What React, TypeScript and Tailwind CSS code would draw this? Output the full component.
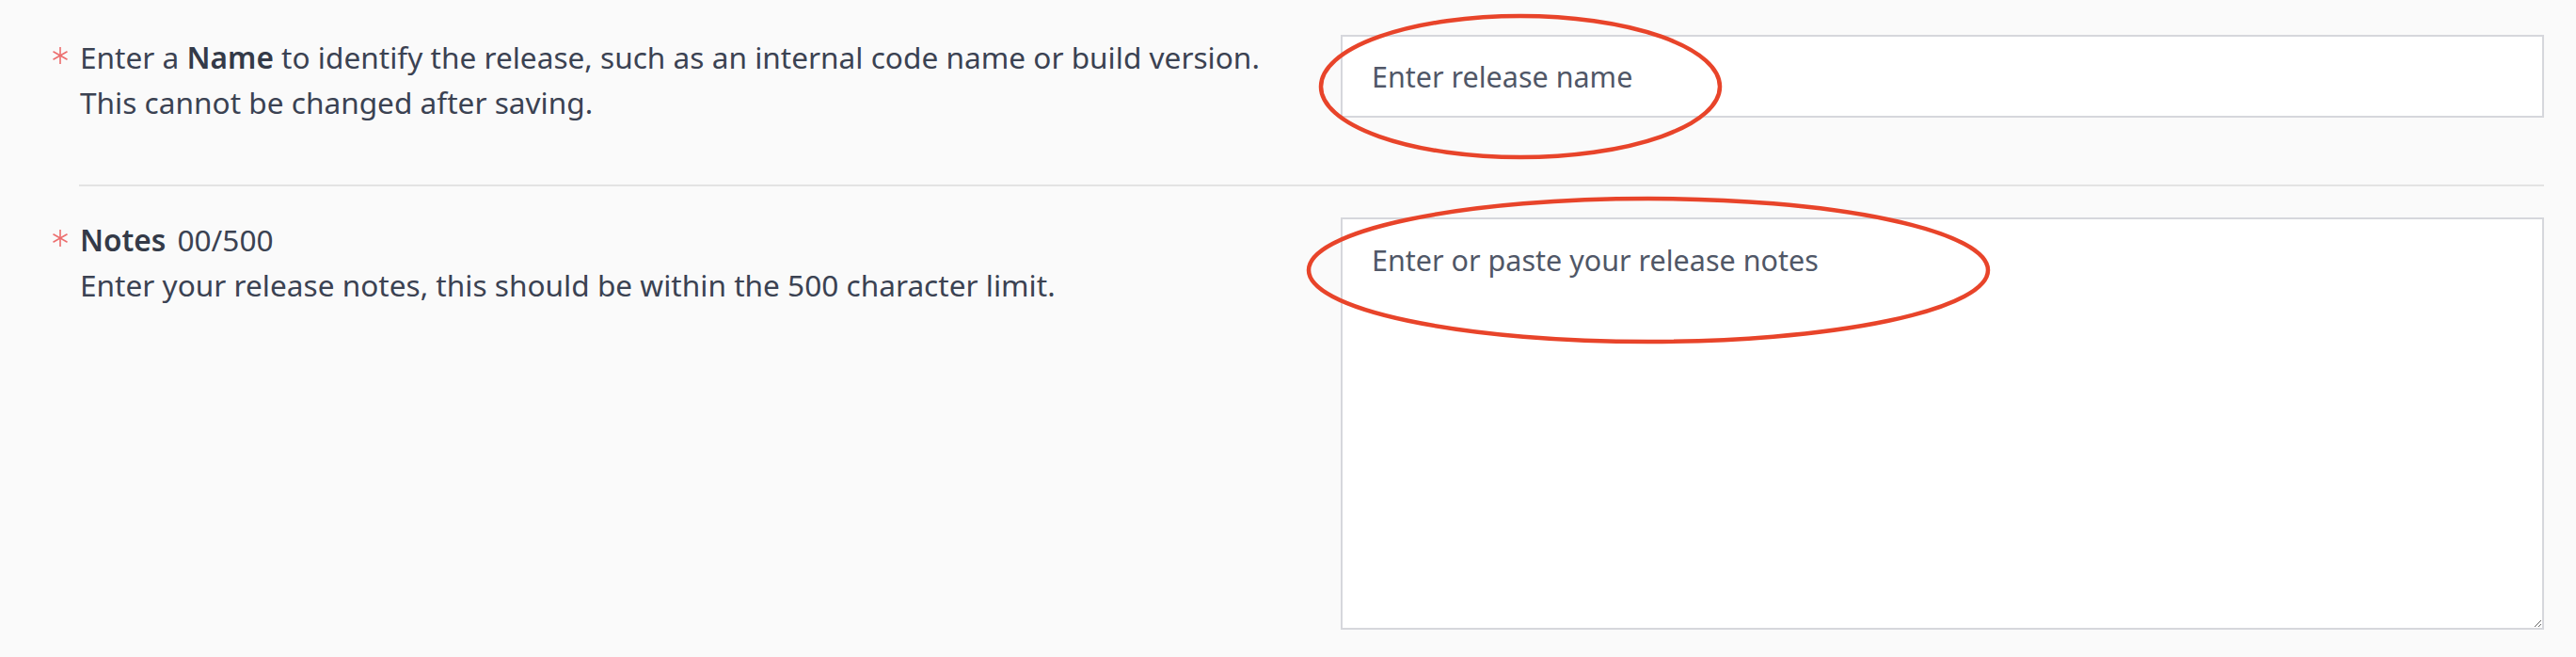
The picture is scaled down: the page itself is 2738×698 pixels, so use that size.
import React from 'react'

const Asterisk = () => (
    <svg width="18" height="18" viewBox="0 0 18 18" className="shrink-0 mt-[13px]" stroke="#ec6d6d" strokeWidth="1.6" fill="none">
        <line x1="9" y1="0" x2="9" y2="18" />
        <line x1="1.5" y1="4.8" x2="16.5" y2="13.2" />
        <line x1="1.5" y1="13.2" x2="16.5" y2="4.8" />
    </svg>
)

const App = () => {
    return (
        <div className="relative min-h-screen bg-[#fafafa] text-[#3b4252] font-['Noto_Sans',sans-serif]">
            <div className="pl-[55px] pr-[34px] pt-[37px]">
                {/* Name row */}
                <div className="flex items-start">
                    <div className="flex flex-1 gap-[12px]">
                        <Asterisk />
                        <p className="text-[31.6px] leading-[48px]">
                            Enter a <span className="font-semibold text-[#343a48]">Name</span> to identify the release, such as an internal code name or build version.
                            <br />
                            This cannot be changed after saving.
                        </p>
                    </div>
                    <input
                        type="text"
                        placeholder="Enter release name"
                        className="w-[1279px] h-[88px] shrink-0 border-2 border-[#d6d7dc] bg-white px-[31px] text-[30.5px] text-[#3b4252] placeholder:text-[#505767] outline-none"
                    />
                </div>

                <div className="ml-[29px] mt-[63px] h-[2px] bg-[#e3e3e3]" />

                {/* Notes row */}
                <div className="flex items-start mt-[33px]">
                    <div className="flex flex-1 gap-[12px]">
                        <Asterisk />
                        <div className="text-[31.6px] leading-[48px]">
                            <p>
                                <span className="font-semibold text-[#343a48]">Notes</span>
                                <span className="ml-[12px]">00/500</span>
                            </p>
                            <p>Enter your release notes, this should be within the 500 character limit.</p>
                        </div>
                    </div>
                    <textarea
                        placeholder="Enter or paste your release notes"
                        className="w-[1279px] h-[438px] shrink-0 border-2 border-[#d6d7dc] bg-white px-[31px] py-[19px] text-[30.5px] leading-[48px] text-[#3b4252] placeholder:text-[#505767] outline-none"
                    />
                </div>
            </div>

            {/* annotation marks */}
            <svg className="absolute inset-0 pointer-events-none" width="2738" height="698" viewBox="0 0 2738 698" fill="none">
                <ellipse cx="1616" cy="92" rx="212" ry="75" stroke="#e8442a" strokeWidth="4.5" />
                <ellipse cx="1752" cy="287" rx="361" ry="76" stroke="#e8442a" strokeWidth="4.5" />
            </svg>
        </div>
    )
}

export default App
